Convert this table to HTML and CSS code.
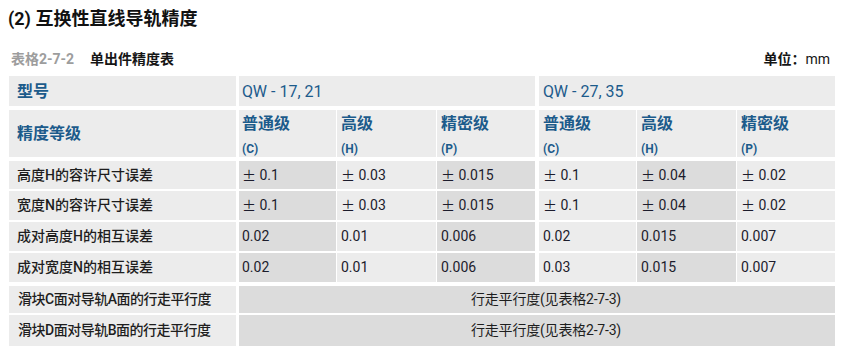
FILE: index.html
```html
<!DOCTYPE html>
<html lang="zh">
<head>
<meta charset="utf-8">
<link rel="stylesheet" href="styles.css">
</head>
<body>
<div class="page">
  <h1 class="title">(2) 互换性直线导轨精度</h1>
  <div class="caption">
    <div class="cap-left"><span class="cap-no">表格2-7-2</span><span class="cap-name">单出件精度表</span></div>
    <div class="unit">单位<span class="colon">：</span><span class="mm">mm</span></div>
  </div>
  <div class="table">
    <div class="row r-h1">
      <div class="cell lab head">型号</div>
      <div class="cell hd g1 span3 model">QW - 17, 21</div>
      <div class="cell hd g2 span3 model">QW - 27, 35</div>
    </div>
    <div class="row r-h2">
      <div class="cell lab head">精度等级</div>
      <div class="cell hd g1 grade"><span class="gname">普通级</span><span class="gcode">(C)</span></div>
      <div class="cell hd grade"><span class="gname">高级</span><span class="gcode">(H)</span></div>
      <div class="cell hd grade"><span class="gname">精密级</span><span class="gcode">(P)</span></div>
      <div class="cell hd g2 grade"><span class="gname">普通级</span><span class="gcode">(C)</span></div>
      <div class="cell hd grade"><span class="gname">高级</span><span class="gcode">(H)</span></div>
      <div class="cell hd grade"><span class="gname">精密级</span><span class="gcode">(P)</span></div>
    </div>
    <div class="row r-d1">
      <div class="cell lab">高度H的容许尺寸误差</div>
      <div class="cell val dark g1"><span class="pm">±</span> 0.1</div>
      <div class="cell val light"><span class="pm">±</span> 0.03</div>
      <div class="cell val dark"><span class="pm">±</span> 0.015</div>
      <div class="cell val light g2"><span class="pm">±</span> 0.1</div>
      <div class="cell val dark"><span class="pm">±</span> 0.04</div>
      <div class="cell val light"><span class="pm">±</span> 0.02</div>
    </div>
    <div class="row r-d2">
      <div class="cell lab">宽度N的容许尺寸误差</div>
      <div class="cell val dark g1"><span class="pm">±</span> 0.1</div>
      <div class="cell val light"><span class="pm">±</span> 0.03</div>
      <div class="cell val dark"><span class="pm">±</span> 0.015</div>
      <div class="cell val light g2"><span class="pm">±</span> 0.1</div>
      <div class="cell val dark"><span class="pm">±</span> 0.04</div>
      <div class="cell val light"><span class="pm">±</span> 0.02</div>
    </div>
    <div class="row r-d3">
      <div class="cell lab">成对高度H的相互误差</div>
      <div class="cell val dark g1">0.02</div>
      <div class="cell val light">0.01</div>
      <div class="cell val dark">0.006</div>
      <div class="cell val light g2">0.02</div>
      <div class="cell val dark">0.015</div>
      <div class="cell val light">0.007</div>
    </div>
    <div class="row r-d4">
      <div class="cell lab">成对宽度N的相互误差</div>
      <div class="cell val dark g1">0.02</div>
      <div class="cell val light">0.01</div>
      <div class="cell val dark">0.006</div>
      <div class="cell val light g2">0.03</div>
      <div class="cell val dark">0.015</div>
      <div class="cell val light">0.007</div>
    </div>
    <div class="row r-m1">
      <div class="cell lab cond">滑块C面对导轨A面的行走平行度</div>
      <div class="cell merged g1 span6">行走平行度(见表格2-7-3)</div>
    </div>
    <div class="row r-m2">
      <div class="cell lab cond">滑块D面对导轨B面的行走平行度</div>
      <div class="cell merged g1 span6">行走平行度(见表格2-7-3)</div>
    </div>
  </div>
</div>
</body>
</html>
```

FILE: styles.css
```css
* { box-sizing: border-box; }

body {
  margin: 0;
  background: #ffffff;
  font-family: Roboto, "Noto Sans CJK SC", sans-serif;
  color: #222222;
}

.page {
  width: 848px;
  padding: 9px 0 0 9px;
}

.title {
  margin: 0 0 0 -1px;
  font-size: 18px;
  line-height: 20px;
  font-weight: 700;
  color: #111111;
  font-family: Roboto, "Noto Sans CJK SC", sans-serif;
}

.caption {
  margin-top: 21px;
  width: 826px;
  display: flex;
  justify-content: space-between;
  align-items: center;
  font-size: 14px;
  line-height: 17px;
  font-weight: 700;
}

.cap-left {
  padding-left: 2px;
  display: flex;
}

.cap-no {
  color: #9d9d9d;
  width: 79px;
}

.cap-name {
  color: #151515;
}

.unit {
  color: #151515;
  padding-right: 5px;
}

.colon {
  font-family: "Noto Sans CJK TC", sans-serif;
}

.mm {
  font-weight: 400;
}

.table {
  margin-top: 8px;
  width: 826px;
  display: flex;
  flex-direction: column;
}

.row {
  display: grid;
  grid-template-columns: 227px 99px 99px 98px 100px 99px 98px;
  column-gap: 1px;
}

.r-h1 { height: 30px; }
.r-h2 { height: 47px; margin-top: 4px; }
.r-d1 { height: 28px; margin-top: 4px; }
.r-d2 { height: 29px; margin-top: 2px; }
.r-d3 { height: 29px; margin-top: 2px; }
.r-d4 { height: 29px; margin-top: 2px; }
.r-m1 { height: 27px; margin-top: 4px; }
.r-m2 { height: 31px; margin-top: 2px; }

.cell {
  display: flex;
  align-items: center;
  background: #ececec;
  font-size: 14px;
  line-height: 17px;
  white-space: pre;
}

.g1 { margin-left: 2px; }
.g2 { margin-left: 3px; }
.span3 { grid-column: span 3; }
.span6 { grid-column: span 6; }

.lab {
  padding-left: 8px;
  color: #1e1e1e;
  font-weight: 500;
}

.cond {
  letter-spacing: -0.5px;
  padding-left: 9px;
}

.head {
  font-size: 16px;
  font-weight: 700;
  color: #1c5b8b;
}

.hd {
  color: #1c5b8b;
  padding-left: 4px;
}

.g1.hd { padding-left: 3px; }

.model {
  font-size: 16px;
  font-weight: 400;
}

.grade {
  flex-direction: column;
  align-items: flex-start;
  justify-content: flex-start;
  padding-top: 4px;
}

.gname {
  font-size: 16px;
  line-height: 20px;
  font-weight: 700;
}

.gcode {
  margin-top: 8px;
  font-size: 12px;
  line-height: 14px;
  font-weight: 700;
}

.val {
  padding-left: 4px;
  color: #1c1c2c;
}

.g1.val { padding-left: 3px; }

.pm {
  font-family: "Noto Sans CJK SC", sans-serif;
  font-weight: 400;
}

.dark { background: #dcdcdc; }
.light { background: #ececec; }

.merged {
  background: #dcdcdc;
  justify-content: center;
  padding-left: 18px;
  color: #1e1e1e;
  letter-spacing: -0.2px;
}
```
